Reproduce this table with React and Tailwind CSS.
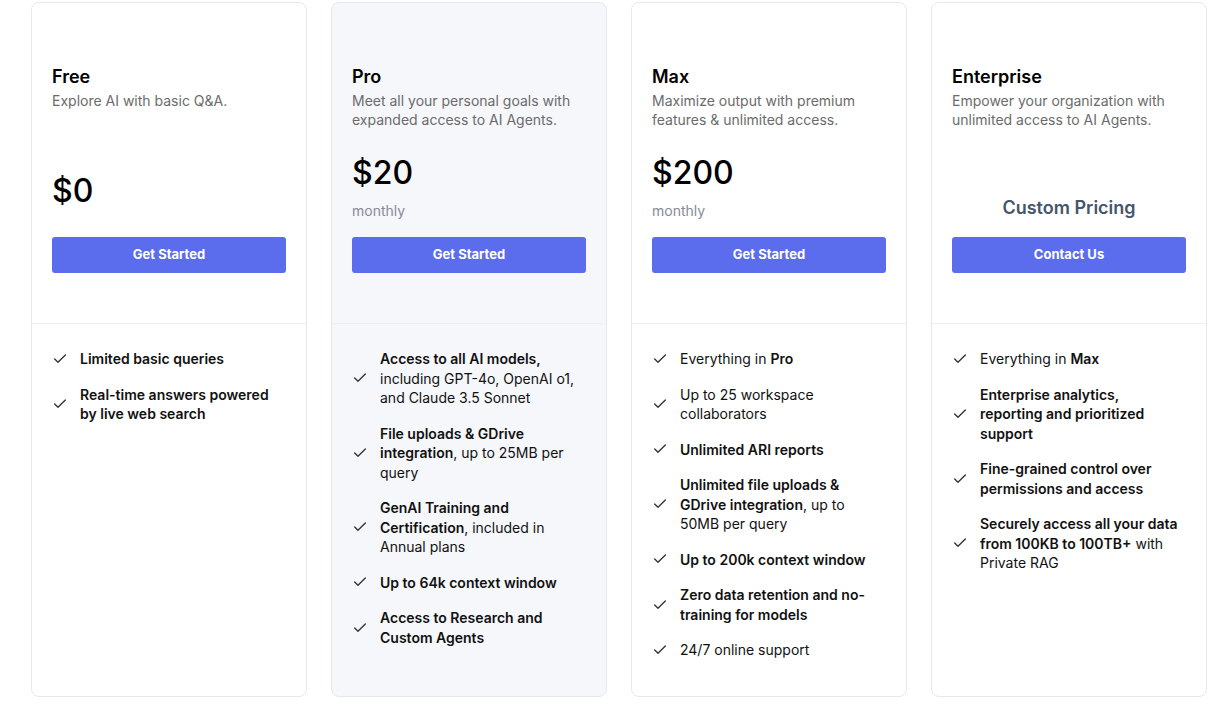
import { Check } from "lucide-react";

const plans = [
  {
    name: "Free",
    desc: "Explore AI with basic Q&A.",
    price: "$0",
    cta: "Get Started",
    features: [
      [<b key="b">Limited basic queries</b>],
      [<b key="b">Real-time answers powered by live web search</b>],
    ],
  },
  {
    name: "Pro",
    desc: "Meet all your personal goals with expanded access to AI Agents.",
    price: "$20",
    period: "monthly",
    cta: "Get Started",
    highlight: true,
    features: [
      [<b key="b">Access to all AI models,</b>, " including GPT-4o, OpenAI o1, and Claude 3.5 Sonnet"],
      [<b key="b">File uploads & GDrive integration</b>, ", up to 25MB per query"],
      [<b key="b">GenAI Training and Certification</b>, ", included in Annual plans"],
      [<b key="b">Up to 64k context window</b>],
      [<b key="b">Access to Research and Custom Agents</b>],
    ],
  },
  {
    name: "Max",
    desc: "Maximize output with premium features & unlimited access.",
    price: "$200",
    period: "monthly",
    cta: "Get Started",
    features: [
      ["Everything in ", <b key="b">Pro</b>],
      ["Up to 25 workspace collaborators"],
      [<b key="b">Unlimited ARI reports</b>],
      [<b key="b">Unlimited file uploads & GDrive integration</b>, ", up to 50MB per query"],
      [<b key="b">Up to 200k context window</b>],
      [<b key="b">Zero data retention and no-training for models</b>],
      ["24/7 online support"],
    ],
  },
  {
    name: "Enterprise",
    desc: "Empower your organization with unlimited access to AI Agents.",
    custom: "Custom Pricing",
    cta: "Contact Us",
    features: [
      ["Everything in ", <b key="b">Max</b>],
      [<b key="b">Enterprise analytics, reporting and prioritized support</b>],
      [<b key="b">Fine-grained control over permissions and access</b>],
      [<b key="b">Securely access all your data from 100KB to 100TB+</b>, " with Private RAG"],
    ],
  },
];

const PriceBlock = ({ plan }) => {
  if (plan.custom) {
    return (
      <div className="text-center text-lg leading-7 font-semibold text-[#465569] translate-y-px">
        {plan.custom}
      </div>
    );
  }
  return (
    <div className={plan.period ? "" : "pb-[10px]"}>
      <div className="text-[32px] leading-10 font-medium text-black">{plan.price}</div>
      {plan.period && <div className="mt-2 text-sm leading-5 text-[#868b96]">{plan.period}</div>}
    </div>
  );
};

const Card = ({ plan }) => (
  <div
    className={`w-[276px] flex flex-col rounded-lg border border-[#e8e8ea] ${
      plan.highlight ? "bg-[#f6f7fb]" : "bg-white"
    }`}
  >
    <div className="px-5 pt-[60px] pb-[50px]">
      <div className="h-[67px]">
        <div className="text-lg leading-7 font-semibold text-black">{plan.name}</div>
        <div className="text-sm leading-[19px] text-[#6b6b6b]">{plan.desc}</div>
      </div>
      <div className="h-[91px] flex flex-col justify-end">
        <PriceBlock plan={plan} />
      </div>
      <button className="mt-4 w-full h-9 rounded-[3px] bg-[#5b6cec] text-white text-[13px] font-bold">
        {plan.cta}
      </button>
    </div>
    <div className="flex-1 border-t border-[#efeff1] px-5 pt-[25px] pb-9">
      <ul className="flex flex-col gap-4">
        {plan.features.map((f, i) => (
          <li key={i} className="flex items-center gap-3 pr-[6px]">
            <Check size={16} strokeWidth={2} className="shrink-0 text-[#333]" />
            <span className="text-sm leading-[19.5px] text-[#111] [&_b]:font-semibold">{f}</span>
          </li>
        ))}
      </ul>
    </div>
  </div>
);

export default function App() {
  return (
    <div
      className="min-h-[706px] bg-white pl-[31px] pt-[2px]"
      style={{ fontFamily: "Inter, 'Noto Sans', sans-serif" }}
    >
      <div className="flex items-stretch gap-6">
        {plans.map((p) => (
          <Card key={p.name} plan={p} />
        ))}
      </div>
    </div>
  );
}
